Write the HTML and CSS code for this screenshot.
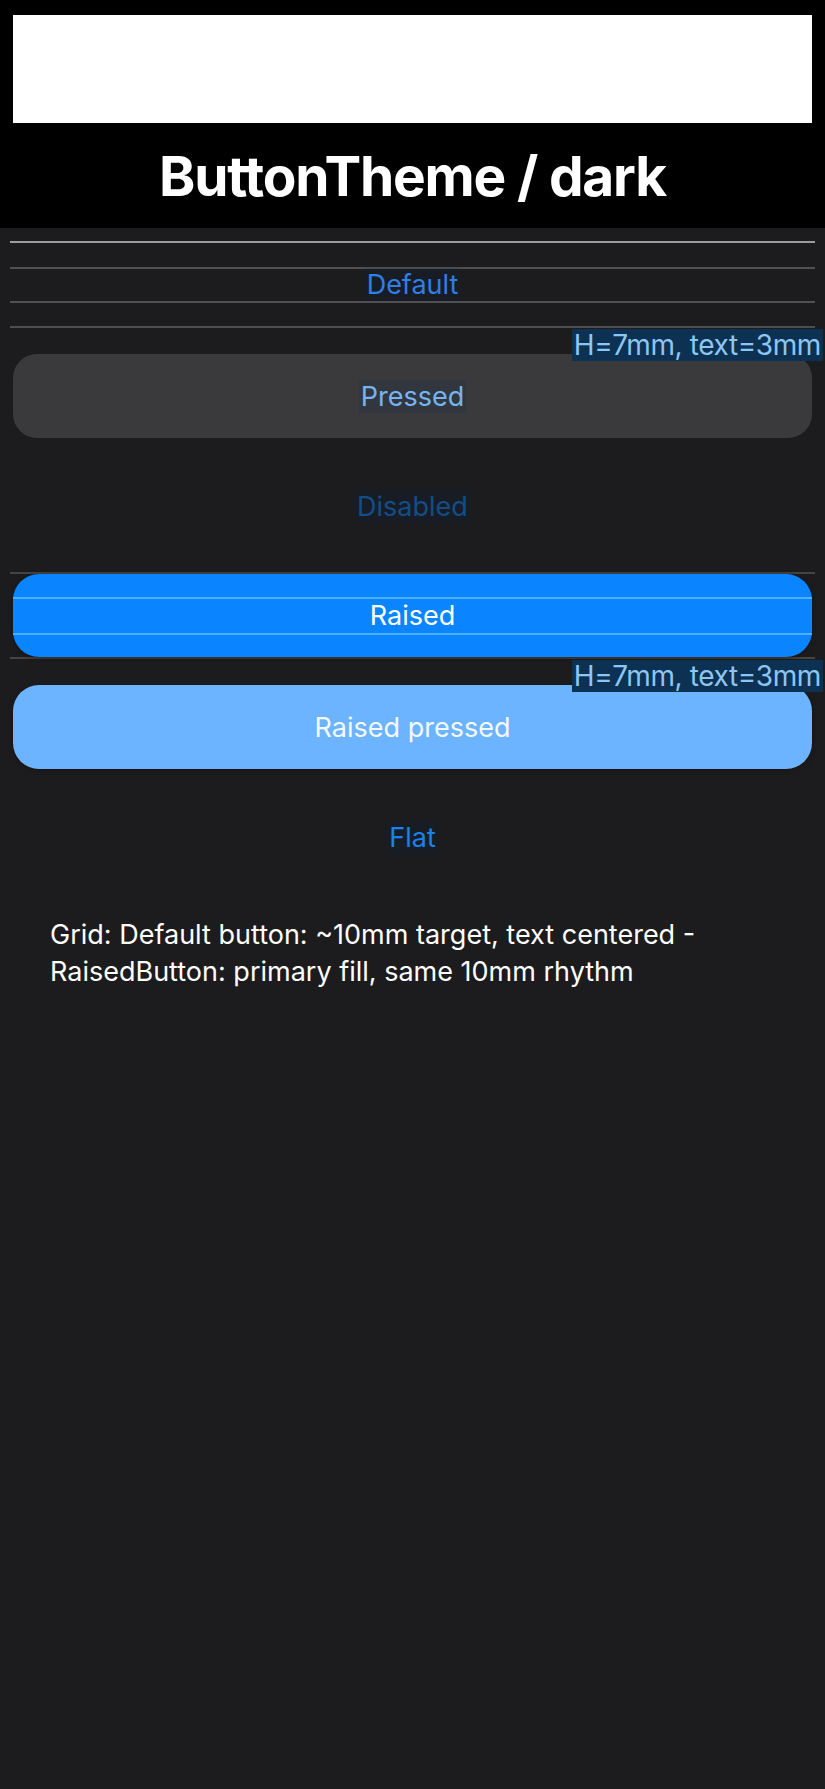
FILE: index.html
```html
<!DOCTYPE html>
<html lang="en">
<head>
  <meta charset="UTF-8">
  <title>ButtonTheme / dark</title>
  <link rel="stylesheet" href="styles.css">
</head>
<body>
  <div class="header">
    <div class="canvas"></div>
    <h1 class="title">ButtonTheme / dark</h1>
  </div>

  <div class="stack">
    <div class="guide">
      <div class="btn btn-default">
        <div class="text-box"><span class="label">Default</span></div>
      </div>
      <span class="measure">H=7mm, text=3mm</span>
    </div>

    <div class="btn btn-pressed"><span class="label">Pressed</span></div>

    <div class="btn btn-disabled"><span class="label">Disabled</span></div>

    <div class="guide guide-raised">
      <div class="btn btn-raised">
        <div class="text-box"><span class="label">Raised</span></div>
      </div>
      <span class="measure">H=7mm, text=3mm</span>
    </div>

    <div class="btn btn-raised-pressed"><span class="label">Raised pressed</span></div>

    <div class="btn btn-flat"><span class="label">Flat</span></div>

    <p class="note">Grid: Default button: ~10mm target, text centered - RaisedButton: primary fill, same 10mm rhythm</p>
  </div>
</body>
</html>
```

FILE: styles.css
```css
body {
  margin: 0;
  background-color: #1c1c1e;
  color: #ffffff;
  font-family: Inter, "Liberation Sans", sans-serif;
}
.header {
  background-color: #000;
  padding: 15px 13px 0;
}
.canvas {
  background-color: #fff;
  height: 108px;
}
.title {
  margin: 0;
  height: 105px;
  display: flex;
  align-items: center;
  justify-content: center;
  font-size: 55px;
  font-weight: 700;
  letter-spacing: -1.2px;
}
.stack {
  display: flex;
  flex-direction: column;
  gap: 26px;
  padding: 13px 13px 0;
}
.guide {
  position: relative;
  margin: 0 -3px;
  padding: 0 3px;
  border-top: 2px solid #9c9c9c;
  border-bottom: 2px solid #4e4e4e;
}
.guide-raised {
  margin-top: -2px;
  border-top-color: #444;
  border-bottom-color: #444;
}
.btn {
  height: 84px;
  border-radius: 24px;
  display: flex;
  align-items: center;
  justify-content: center;
  font-size: 27px;
}
.guide .btn {
  height: 83px;
}
.text-box {
  flex: 1;
  height: 32px;
  margin: 0 -3px;
  display: flex;
  align-items: center;
  justify-content: center;
  border-top: 2px solid #505050;
  border-bottom: 2px solid #505050;
}
.label {
  padding: 0 2px;
  background-color: rgba(10, 40, 80, 0.15);
}
.btn-default {
  color: #2f7fe6;
}
.btn-pressed {
  background-color: #3a3a3c;
  color: #77b4f0;
}
.btn-disabled {
  color: #124d88;
}
.btn-raised {
  background-color: #0a84ff;
  color: #fff;
  border-radius: 26px;
  box-shadow: 0 1px 4px rgba(30, 12, 0, 0.6);
}
.btn-raised .text-box {
  height: 34px;
  margin: 0;
  border-top-color: #4db0ff;
  border-bottom-color: #4db0ff;
}
.btn-raised .label {
  background: none;
}
.btn-raised-pressed {
  background-color: #6cb4ff;
  color: #f4f9ff;
  border-radius: 26px;
  box-shadow: 0 1px 4px rgba(30, 12, 0, 0.6);
}
.btn-raised-pressed .label {
  background: none;
}
.btn-flat {
  color: #1a82f0;
}
.measure {
  position: absolute;
  top: 100%;
  right: -8px;
  margin-top: 3px;
  padding: 1px 2px;
  background-color: #0c3152;
  color: #8cc6f2;
  font-size: 28px;
  line-height: 30px;
  letter-spacing: -0.4px;
  z-index: 1;
}
.note {
  margin: 11px 0 0;
  padding: 0 37px;
  font-size: 27px;
  line-height: 37px;
}
```
